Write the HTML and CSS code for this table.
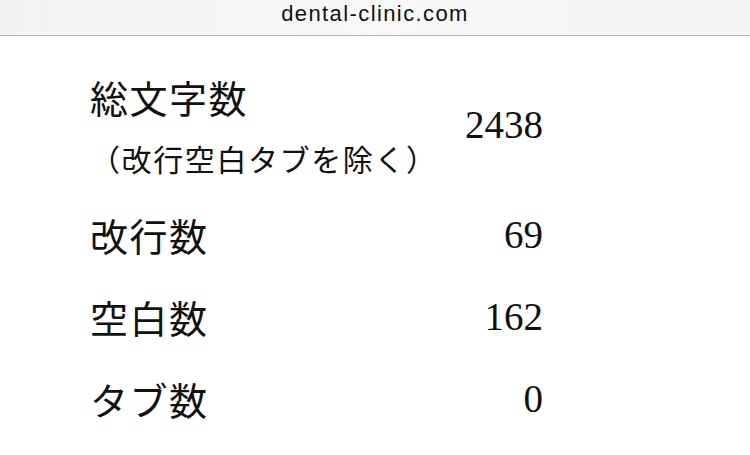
FILE: index.html
```html
<!DOCTYPE html>
<html lang="ja">
<head>
<meta charset="utf-8">
<title>dental-clinic.com</title>
<link rel="stylesheet" href="styles.css">
</head>
<body>
<header class="bar"><span class="url">dental-clinic.com</span></header>
<main class="stats">
  <div class="row">
    <div class="label">
      <div class="main">総文字数</div>
      <div class="sub">（改行空白タブを除く）</div>
    </div>
    <div class="num">2438</div>
  </div>
  <div class="row">
    <div class="label"><div class="main">改行数</div></div>
    <div class="num">69</div>
  </div>
  <div class="row">
    <div class="label"><div class="main">空白数</div></div>
    <div class="num">162</div>
  </div>
  <div class="row">
    <div class="label"><div class="main">タブ数</div></div>
    <div class="num">0</div>
  </div>
</main>
</body>
</html>
```
FILE: styles.css
```css
html, body {
  margin: 0;
  padding: 0;
  background: #ffffff;
}
body {
  width: 750px;
  height: 455px;
  overflow: hidden;
  font-family: "Noto Sans CJK JP", sans-serif;
  color: #111;
}
.bar {
  height: 35px;
  border-bottom: 1px solid #b4b4b4;
  background: linear-gradient(90deg, #f2f2f2 0%, #f8f8f8 50%, #f3f3f3 100%);
  display: flex;
  justify-content: center;
  align-items: center;
}
.url {
  font-family: "Liberation Sans", Arial, sans-serif;
  font-size: 22px;
  letter-spacing: 1.4px;
  color: #111;
  margin-top: -8px;
}
.stats {
  margin: 20px 0 0 90px;
  width: 453px;
  display: flex;
  flex-direction: column;
}
.row {
  display: flex;
  justify-content: space-between;
  align-items: center;
  padding: 21px 0;
}
.main {
  font-size: 38px;
  line-height: 40px;
  letter-spacing: 1.5px;
}
.sub {
  font-size: 30px;
  line-height: 30px;
  letter-spacing: 1.6px;
  margin-top: 26px;
}
.num {
  font-family: "Liberation Serif", "Times New Roman", serif;
  font-size: 39px;
  line-height: 40px;
}
```
